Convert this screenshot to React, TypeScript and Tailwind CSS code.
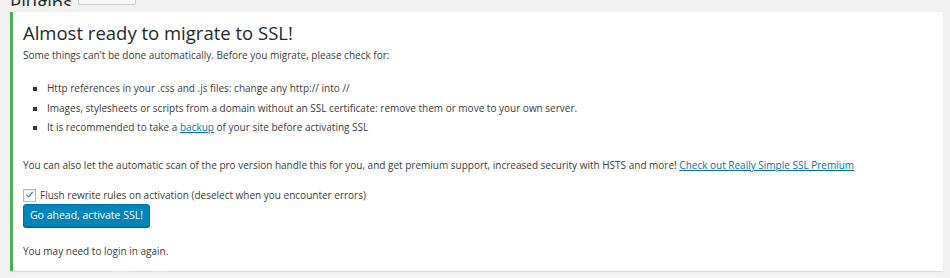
export default function App() {
  return (
    <div
      className="w-[950px] h-[278px] overflow-hidden bg-[#f1f1f1] text-[#3c3c3c] text-[10px]"
      style={{ fontFamily: '"Open Sans", "Noto Sans", sans-serif' }}
    >
      <div className="flex items-end gap-[6px] pl-[10px] h-[6px] overflow-hidden">
        <h1 className="text-[18.5px] leading-[22px] -mb-[8px] text-[#23282d] font-normal">Plugins</h1>
        <span className="mb-[1px] h-[22px] w-[58px] border border-[#ccc] bg-[#f7f7f7] rounded-[2px]" />
      </div>
      <div className="ml-[10px] mt-[6px] w-[933px] h-[259px] bg-white border-l-[3px] border-[#46b450] shadow-[0_1px_1px_rgba(0,0,0,0.08)] pl-[10px] pr-[12px]">
        <h2 className="pt-[9px] text-[18.5px] leading-[24px] text-[#23282d] font-normal">
          Almost ready to migrate to SSL!
        </h2>
        <p className="leading-[20px]">
          Some things can't be done automatically. Before you migrate, please check for:
        </p>
        <ul className="mt-[14px] pl-[24px] leading-[19.5px] list-[square] marker:text-[#333]">
          <li>Http references in your .css and .js files: change any http:// into //</li>
          <li>Images, stylesheets or scripts from a domain without an SSL certificate: remove them or move to your own server.</li>
          <li>
            It is recommended to take a{' '}
            <a href="#" className="text-[#0073aa] underline">backup</a> of your site before activating SSL
          </li>
        </ul>
        <p className="mt-[17.5px] leading-[20px]">
          You can also let the automatic scan of the pro version handle this for you, and get premium support, increased security with HSTS and more!{' '}
          <a href="#" className="text-[#0073aa] underline">Check out Really Simple SSL Premium</a>
        </p>
        <label className="mt-[13px] h-[15px] flex items-center gap-[4px]">
          <span className="w-[13px] h-[13px] border border-[#b4b9be] bg-white shadow-[inset_0_1px_2px_rgba(0,0,0,0.1)] flex items-center justify-center">
            <svg viewBox="0 0 20 20" className="w-[15px] h-[15px] -mt-[2px]">
              <path d="M14.8 4.5 L8.6 13 L5 9.6 L3.6 11.1 L8.8 16 L16.6 5.7 Z" fill="#1e8cbe" />
            </svg>
          </span>
          Flush rewrite rules on activation (deselect when you encounter errors)
        </label>
        <button className="mt-[1px] h-[23px] w-[127px] bg-[#0085ba] border border-[#0073aa] rounded-[3px] text-white text-[10.5px] leading-[21px] shadow-[0_1px_0_#006799]">
          Go ahead, activate SSL!
        </button>
        <p className="mt-[14px] leading-[20px]">You may need to login in again.</p>
      </div>
    </div>
  );
}
